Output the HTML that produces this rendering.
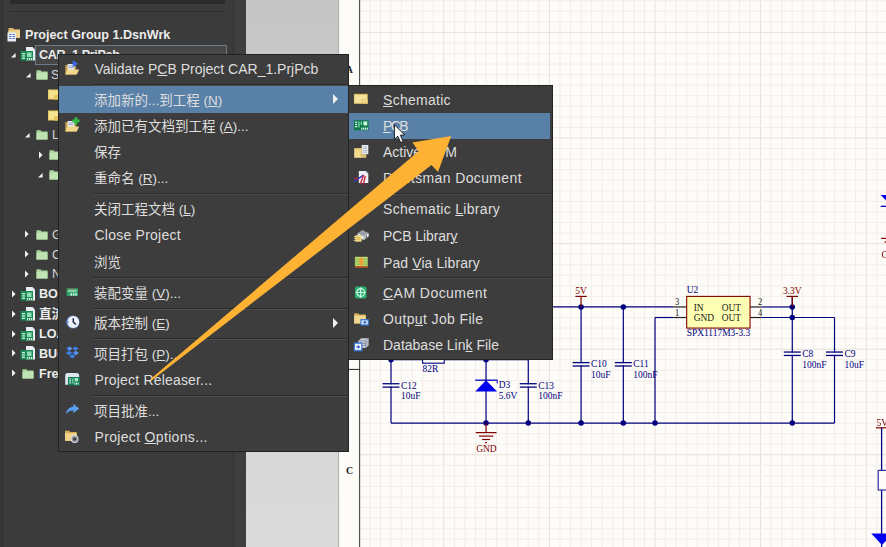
<!DOCTYPE html>
<html><head><meta charset="utf-8"><title>Altium Designer</title>
<style>
html,body{margin:0;padding:0}
html{overflow:hidden;background:#3b3b3b}
#app{position:absolute;left:-8px;top:-8px;width:902px;height:563px;filter:blur(0.45px)}
#stage{position:absolute;left:8px;top:8px;width:886px;height:547px}
body{width:886px;height:547px;overflow:hidden;position:relative;background:#3b3b3b;font-family:"Liberation Sans","Noto Sans CJK SC",sans-serif}
#panel{position:absolute;left:-8px;top:-8px;width:241px;height:563px;background:#3b3b3b}
#lstrip{position:absolute;left:-8px;top:-8px;width:10px;height:563px;background:#363636;border-right:1px solid #303030}
#search{position:absolute;left:10px;top:-8px;width:215px;height:12px;background:#2b2b2b}
#hline{position:absolute;left:10px;top:11.3px;width:215px;height:1px;background:#2e2e2e}
#vline{position:absolute;left:232.5px;top:-8px;width:1.5px;height:563px;background:#303030}
#strip{position:absolute;left:234px;top:-8px;width:12.3px;height:563px;background:#3e3e3e}
#gray{position:absolute;left:246px;top:-8px;width:92.5px;height:563px;background:linear-gradient(#c5c5c5,#dbdbdb);border-right:1px solid #a4a4a4;box-sizing:border-box}
#sheet{position:absolute;left:338px;top:-8px;width:556px;height:563px;background:#fdfcf8}
#sheetsvg{position:absolute;left:0;top:0;overflow:visible}
#sheetsvg text{font-family:"Liberation Serif",serif}
.tree{position:absolute;color:#ececec;font-weight:bold;font-size:12.6px;white-space:nowrap;line-height:16px}
.menu{position:absolute;background:#3d3d3d;border:1px solid #232323;box-sizing:border-box;color:#dedede;font-size:14px}
.row{position:absolute;left:0;right:0;height:26px;line-height:26px;white-space:nowrap}
.row.hl{background:#5981a8}
#mainmenu .row.hl{height:27px;line-height:27px}
#submenu .row.hl{right:1.5px}
#submenu .row,#submenu .sep{margin-top:0.5px}
.row .lb{position:absolute;left:34px;top:0}
#mainmenu .row .lb{left:35.5px}
#mainmenu .row .ic{left:5px;top:4px}
.row .ic{position:absolute;left:4px;top:5px;width:16px;height:16px}
.row .ic svg{display:block}
.row u{text-decoration:underline;text-underline-offset:1px;text-decoration-thickness:1px}
.row .ar{position:absolute;right:10px;top:8px;width:0;height:0;border-left:5px solid #f0f0f0;border-top:5px solid transparent;border-bottom:5px solid transparent}
.sep{position:absolute;left:34px;right:0;height:1px;background:#4c4c4c;border-top:1px solid #2c2c2c}
</style></head><body>
<div id="app"><div id="stage">
<div id="panel"></div><div id="lstrip"></div><div id="search"></div><div id="hline"></div>
<div id="vline"></div><div id="strip"></div><div id="gray"></div><div id="sheet"></div>
<svg id="sheetsvg" width="886" height="547" viewBox="0 0 886 547">
<g shape-rendering="auto">
<line x1="359.32" y1="-8" x2="359.32" y2="555" stroke="#f2eee9" stroke-width="1"/>
<line x1="369.88" y1="-8" x2="369.88" y2="555" stroke="#f2eee9" stroke-width="1"/>
<line x1="380.44" y1="-8" x2="380.44" y2="555" stroke="#f2eee9" stroke-width="1"/>
<line x1="391.0" y1="-8" x2="391.0" y2="555" stroke="#f2eee9" stroke-width="1"/>
<line x1="401.56" y1="-8" x2="401.56" y2="555" stroke="#f2eee9" stroke-width="1"/>
<line x1="412.12" y1="-8" x2="412.12" y2="555" stroke="#f2eee9" stroke-width="1"/>
<line x1="422.68" y1="-8" x2="422.68" y2="555" stroke="#f2eee9" stroke-width="1"/>
<line x1="433.24" y1="-8" x2="433.24" y2="555" stroke="#f2eee9" stroke-width="1"/>
<line x1="443.8" y1="-8" x2="443.8" y2="555" stroke="#e6e0da" stroke-width="1"/>
<line x1="454.36" y1="-8" x2="454.36" y2="555" stroke="#f2eee9" stroke-width="1"/>
<line x1="464.92" y1="-8" x2="464.92" y2="555" stroke="#f2eee9" stroke-width="1"/>
<line x1="475.48" y1="-8" x2="475.48" y2="555" stroke="#f2eee9" stroke-width="1"/>
<line x1="486.04" y1="-8" x2="486.04" y2="555" stroke="#f2eee9" stroke-width="1"/>
<line x1="496.6" y1="-8" x2="496.6" y2="555" stroke="#f2eee9" stroke-width="1"/>
<line x1="507.16" y1="-8" x2="507.16" y2="555" stroke="#f2eee9" stroke-width="1"/>
<line x1="517.72" y1="-8" x2="517.72" y2="555" stroke="#f2eee9" stroke-width="1"/>
<line x1="528.28" y1="-8" x2="528.28" y2="555" stroke="#f2eee9" stroke-width="1"/>
<line x1="538.84" y1="-8" x2="538.84" y2="555" stroke="#f2eee9" stroke-width="1"/>
<line x1="549.4" y1="-8" x2="549.4" y2="555" stroke="#e6e0da" stroke-width="1"/>
<line x1="559.96" y1="-8" x2="559.96" y2="555" stroke="#f2eee9" stroke-width="1"/>
<line x1="570.52" y1="-8" x2="570.52" y2="555" stroke="#f2eee9" stroke-width="1"/>
<line x1="581.08" y1="-8" x2="581.08" y2="555" stroke="#f2eee9" stroke-width="1"/>
<line x1="591.64" y1="-8" x2="591.64" y2="555" stroke="#f2eee9" stroke-width="1"/>
<line x1="602.2" y1="-8" x2="602.2" y2="555" stroke="#f2eee9" stroke-width="1"/>
<line x1="612.76" y1="-8" x2="612.76" y2="555" stroke="#f2eee9" stroke-width="1"/>
<line x1="623.32" y1="-8" x2="623.32" y2="555" stroke="#f2eee9" stroke-width="1"/>
<line x1="633.88" y1="-8" x2="633.88" y2="555" stroke="#f2eee9" stroke-width="1"/>
<line x1="644.44" y1="-8" x2="644.44" y2="555" stroke="#f2eee9" stroke-width="1"/>
<line x1="655.0" y1="-8" x2="655.0" y2="555" stroke="#e6e0da" stroke-width="1"/>
<line x1="665.56" y1="-8" x2="665.56" y2="555" stroke="#f2eee9" stroke-width="1"/>
<line x1="676.12" y1="-8" x2="676.12" y2="555" stroke="#f2eee9" stroke-width="1"/>
<line x1="686.68" y1="-8" x2="686.68" y2="555" stroke="#f2eee9" stroke-width="1"/>
<line x1="697.24" y1="-8" x2="697.24" y2="555" stroke="#f2eee9" stroke-width="1"/>
<line x1="707.8" y1="-8" x2="707.8" y2="555" stroke="#f2eee9" stroke-width="1"/>
<line x1="718.36" y1="-8" x2="718.36" y2="555" stroke="#f2eee9" stroke-width="1"/>
<line x1="728.92" y1="-8" x2="728.92" y2="555" stroke="#f2eee9" stroke-width="1"/>
<line x1="739.48" y1="-8" x2="739.48" y2="555" stroke="#f2eee9" stroke-width="1"/>
<line x1="750.04" y1="-8" x2="750.04" y2="555" stroke="#f2eee9" stroke-width="1"/>
<line x1="760.6" y1="-8" x2="760.6" y2="555" stroke="#e6e0da" stroke-width="1"/>
<line x1="771.16" y1="-8" x2="771.16" y2="555" stroke="#f2eee9" stroke-width="1"/>
<line x1="781.72" y1="-8" x2="781.72" y2="555" stroke="#f2eee9" stroke-width="1"/>
<line x1="792.28" y1="-8" x2="792.28" y2="555" stroke="#f2eee9" stroke-width="1"/>
<line x1="802.84" y1="-8" x2="802.84" y2="555" stroke="#f2eee9" stroke-width="1"/>
<line x1="813.4" y1="-8" x2="813.4" y2="555" stroke="#f2eee9" stroke-width="1"/>
<line x1="823.96" y1="-8" x2="823.96" y2="555" stroke="#f2eee9" stroke-width="1"/>
<line x1="834.52" y1="-8" x2="834.52" y2="555" stroke="#f2eee9" stroke-width="1"/>
<line x1="845.08" y1="-8" x2="845.08" y2="555" stroke="#f2eee9" stroke-width="1"/>
<line x1="855.64" y1="-8" x2="855.64" y2="555" stroke="#f2eee9" stroke-width="1"/>
<line x1="866.2" y1="-8" x2="866.2" y2="555" stroke="#e6e0da" stroke-width="1"/>
<line x1="876.76" y1="-8" x2="876.76" y2="555" stroke="#f2eee9" stroke-width="1"/>
<line x1="887.32" y1="-8" x2="887.32" y2="555" stroke="#f2eee9" stroke-width="1"/>
<line x1="359.32" y1="-9.84" x2="894" y2="-9.84" stroke="#f2eee9" stroke-width="1"/>
<line x1="359.32" y1="0.72" x2="894" y2="0.72" stroke="#f2eee9" stroke-width="1"/>
<line x1="359.32" y1="11.28" x2="894" y2="11.28" stroke="#f2eee9" stroke-width="1"/>
<line x1="359.32" y1="21.84" x2="894" y2="21.84" stroke="#f2eee9" stroke-width="1"/>
<line x1="359.32" y1="32.4" x2="894" y2="32.4" stroke="#e6e0da" stroke-width="1"/>
<line x1="359.32" y1="42.96" x2="894" y2="42.96" stroke="#f2eee9" stroke-width="1"/>
<line x1="359.32" y1="53.52" x2="894" y2="53.52" stroke="#f2eee9" stroke-width="1"/>
<line x1="359.32" y1="64.08" x2="894" y2="64.08" stroke="#f2eee9" stroke-width="1"/>
<line x1="359.32" y1="74.64" x2="894" y2="74.64" stroke="#f2eee9" stroke-width="1"/>
<line x1="359.32" y1="85.2" x2="894" y2="85.2" stroke="#f2eee9" stroke-width="1"/>
<line x1="359.32" y1="95.76" x2="894" y2="95.76" stroke="#f2eee9" stroke-width="1"/>
<line x1="359.32" y1="106.32" x2="894" y2="106.32" stroke="#f2eee9" stroke-width="1"/>
<line x1="359.32" y1="116.88" x2="894" y2="116.88" stroke="#f2eee9" stroke-width="1"/>
<line x1="359.32" y1="127.44" x2="894" y2="127.44" stroke="#f2eee9" stroke-width="1"/>
<line x1="359.32" y1="138.0" x2="894" y2="138.0" stroke="#e6e0da" stroke-width="1"/>
<line x1="359.32" y1="148.56" x2="894" y2="148.56" stroke="#f2eee9" stroke-width="1"/>
<line x1="359.32" y1="159.12" x2="894" y2="159.12" stroke="#f2eee9" stroke-width="1"/>
<line x1="359.32" y1="169.68" x2="894" y2="169.68" stroke="#f2eee9" stroke-width="1"/>
<line x1="359.32" y1="180.24" x2="894" y2="180.24" stroke="#f2eee9" stroke-width="1"/>
<line x1="359.32" y1="190.8" x2="894" y2="190.8" stroke="#f2eee9" stroke-width="1"/>
<line x1="359.32" y1="201.36" x2="894" y2="201.36" stroke="#f2eee9" stroke-width="1"/>
<line x1="359.32" y1="211.92" x2="894" y2="211.92" stroke="#f2eee9" stroke-width="1"/>
<line x1="359.32" y1="222.48" x2="894" y2="222.48" stroke="#f2eee9" stroke-width="1"/>
<line x1="359.32" y1="233.04" x2="894" y2="233.04" stroke="#f2eee9" stroke-width="1"/>
<line x1="359.32" y1="243.6" x2="894" y2="243.6" stroke="#e6e0da" stroke-width="1"/>
<line x1="359.32" y1="254.16" x2="894" y2="254.16" stroke="#f2eee9" stroke-width="1"/>
<line x1="359.32" y1="264.72" x2="894" y2="264.72" stroke="#f2eee9" stroke-width="1"/>
<line x1="359.32" y1="275.28" x2="894" y2="275.28" stroke="#f2eee9" stroke-width="1"/>
<line x1="359.32" y1="285.84" x2="894" y2="285.84" stroke="#f2eee9" stroke-width="1"/>
<line x1="359.32" y1="296.4" x2="894" y2="296.4" stroke="#f2eee9" stroke-width="1"/>
<line x1="359.32" y1="306.96" x2="894" y2="306.96" stroke="#f2eee9" stroke-width="1"/>
<line x1="359.32" y1="317.52" x2="894" y2="317.52" stroke="#f2eee9" stroke-width="1"/>
<line x1="359.32" y1="328.08" x2="894" y2="328.08" stroke="#f2eee9" stroke-width="1"/>
<line x1="359.32" y1="338.64" x2="894" y2="338.64" stroke="#f2eee9" stroke-width="1"/>
<line x1="359.32" y1="349.2" x2="894" y2="349.2" stroke="#e6e0da" stroke-width="1"/>
<line x1="359.32" y1="359.76" x2="894" y2="359.76" stroke="#f2eee9" stroke-width="1"/>
<line x1="359.32" y1="370.32" x2="894" y2="370.32" stroke="#f2eee9" stroke-width="1"/>
<line x1="359.32" y1="380.88" x2="894" y2="380.88" stroke="#f2eee9" stroke-width="1"/>
<line x1="359.32" y1="391.44" x2="894" y2="391.44" stroke="#f2eee9" stroke-width="1"/>
<line x1="359.32" y1="402.0" x2="894" y2="402.0" stroke="#f2eee9" stroke-width="1"/>
<line x1="359.32" y1="412.56" x2="894" y2="412.56" stroke="#f2eee9" stroke-width="1"/>
<line x1="359.32" y1="423.12" x2="894" y2="423.12" stroke="#f2eee9" stroke-width="1"/>
<line x1="359.32" y1="433.68" x2="894" y2="433.68" stroke="#f2eee9" stroke-width="1"/>
<line x1="359.32" y1="444.24" x2="894" y2="444.24" stroke="#f2eee9" stroke-width="1"/>
<line x1="359.32" y1="454.8" x2="894" y2="454.8" stroke="#e6e0da" stroke-width="1"/>
<line x1="359.32" y1="465.36" x2="894" y2="465.36" stroke="#f2eee9" stroke-width="1"/>
<line x1="359.32" y1="475.92" x2="894" y2="475.92" stroke="#f2eee9" stroke-width="1"/>
<line x1="359.32" y1="486.48" x2="894" y2="486.48" stroke="#f2eee9" stroke-width="1"/>
<line x1="359.32" y1="497.04" x2="894" y2="497.04" stroke="#f2eee9" stroke-width="1"/>
<line x1="359.32" y1="507.6" x2="894" y2="507.6" stroke="#f2eee9" stroke-width="1"/>
<line x1="359.32" y1="518.16" x2="894" y2="518.16" stroke="#f2eee9" stroke-width="1"/>
<line x1="359.32" y1="528.72" x2="894" y2="528.72" stroke="#f2eee9" stroke-width="1"/>
<line x1="359.32" y1="539.28" x2="894" y2="539.28" stroke="#f2eee9" stroke-width="1"/>
<line x1="359.32" y1="549.84" x2="894" y2="549.84" stroke="#f2eee9" stroke-width="1"/>
</g>
<line x1="359.6" y1="-8" x2="359.6" y2="555" stroke="#484848" stroke-width="1.1"/>
<line x1="338" y1="369.4" x2="359.5" y2="369.4" stroke="#202020" stroke-width="1"/>
<line x1="338.6" y1="-8" x2="338.6" y2="555" stroke="#a8a8a8" stroke-width="1"/>
<line x1="540" y1="306.96" x2="673.48" y2="306.96" stroke="#00007e" stroke-width="1.2"/>
<line x1="673.48" y1="306.96" x2="686.68" y2="306.96" stroke="#202020" stroke-width="1.2"/>
<line x1="673.48" y1="317.52" x2="686.68" y2="317.52" stroke="#202020" stroke-width="1.2"/>
<line x1="655.0" y1="317.52" x2="673.48" y2="317.52" stroke="#00007e" stroke-width="1.2"/>
<line x1="655.0" y1="317.52" x2="655.0" y2="423.12" stroke="#00007e" stroke-width="1.2"/>
<line x1="750.04" y1="306.96" x2="761.66" y2="306.96" stroke="#202020" stroke-width="1.2"/>
<line x1="750.04" y1="317.52" x2="761.66" y2="317.52" stroke="#202020" stroke-width="1.2"/>
<line x1="761.66" y1="306.96" x2="792.28" y2="306.96" stroke="#00007e" stroke-width="1.2"/>
<line x1="761.66" y1="317.52" x2="834.52" y2="317.52" stroke="#00007e" stroke-width="1.2"/>
<line x1="834.52" y1="317.52" x2="834.52" y2="423.12" stroke="#00007e" stroke-width="1.2"/>
<line x1="391.0" y1="423.12" x2="834.52" y2="423.12" stroke="#00007e" stroke-width="1.2"/>
<line x1="581.08" y1="306.96" x2="581.08" y2="423.12" stroke="#00007e" stroke-width="1.2"/>
<line x1="623.32" y1="306.96" x2="623.32" y2="423.12" stroke="#00007e" stroke-width="1.2"/>
<line x1="792.28" y1="296.4" x2="792.28" y2="423.12" stroke="#00007e" stroke-width="1.2"/>
<line x1="391.0" y1="355" x2="391.0" y2="423.12" stroke="#00007e" stroke-width="1.2"/>
<line x1="486.04" y1="355" x2="486.04" y2="423.12" stroke="#00007e" stroke-width="1.2"/>
<line x1="528.28" y1="355" x2="528.28" y2="423.12" stroke="#00007e" stroke-width="1.2"/>
<line x1="391.0" y1="359.76" x2="528.28" y2="359.76" stroke="#00007e" stroke-width="1.2"/>
<circle cx="486.04" cy="423.12" r="2.75" fill="#00007e"/>
<circle cx="528.28" cy="423.12" r="2.75" fill="#00007e"/>
<circle cx="581.08" cy="423.12" r="2.75" fill="#00007e"/>
<circle cx="623.32" cy="423.12" r="2.75" fill="#00007e"/>
<circle cx="655.0" cy="423.12" r="2.75" fill="#00007e"/>
<circle cx="792.28" cy="423.12" r="2.75" fill="#00007e"/>
<circle cx="581.08" cy="306.96" r="2.75" fill="#00007e"/>
<circle cx="623.32" cy="306.96" r="2.75" fill="#00007e"/>
<circle cx="792.28" cy="306.96" r="2.75" fill="#00007e"/>
<circle cx="792.28" cy="317.52" r="2.75" fill="#00007e"/>
<circle cx="391.0" cy="359.76" r="2.75" fill="#00007e"/>
<circle cx="486.04" cy="359.76" r="2.75" fill="#00007e"/>
<rect x="686.68" y="296.4" width="63.36" height="31.68" fill="#ffffb3" stroke="#800000" stroke-width="1.1"/>
<text transform="translate(686.68,293.4) scale(0.9,1)" fill="#00007e" font-size="10.5" text-anchor="start" >U2</text>
<text transform="translate(686.68,336.28) scale(0.9,1)" fill="#00007e" font-size="10.5" text-anchor="start" >SPX1117M3-3.3</text>
<text transform="translate(693.68,310.76) scale(0.9,1)" fill="#202020" font-size="10.5" text-anchor="start" >IN</text>
<text transform="translate(693.68,321.32) scale(0.9,1)" fill="#202020" font-size="10.5" text-anchor="start" >GND</text>
<text transform="translate(741.04,310.76) scale(0.9,1)" fill="#202020" font-size="10.5" text-anchor="end" >OUT</text>
<text transform="translate(741.04,321.32) scale(0.9,1)" fill="#202020" font-size="10.5" text-anchor="end" >OUT</text>
<text transform="translate(679.29,304.96) scale(0.9,1)" fill="#202020" font-size="9.5" text-anchor="end" >3</text>
<text transform="translate(679.29,316.02) scale(0.9,1)" fill="#202020" font-size="9.5" text-anchor="end" >1</text>
<text transform="translate(757.96,304.96) scale(0.9,1)" fill="#202020" font-size="9.5" text-anchor="start" >2</text>
<text transform="translate(757.96,316.02) scale(0.9,1)" fill="#202020" font-size="9.5" text-anchor="start" >4</text>
<line x1="575.38" y1="296.4" x2="586.7800000000001" y2="296.4" stroke="#800000" stroke-width="1.2"/>
<line x1="581.08" y1="296.4" x2="581.08" y2="306.96" stroke="#800000" stroke-width="1.2"/>
<text transform="translate(581.08,294.4) scale(0.9,1)" fill="#800000" font-size="10.5" text-anchor="middle" >5V</text>
<line x1="786.5799999999999" y1="296.4" x2="797.98" y2="296.4" stroke="#800000" stroke-width="1.2"/>
<line x1="792.28" y1="296.4" x2="792.28" y2="306.96" stroke="#800000" stroke-width="1.2"/>
<text transform="translate(792.28,294.4) scale(0.9,1)" fill="#800000" font-size="10.5" text-anchor="middle" >3.3V</text>
<rect x="579.58" y="363.21000000000004" width="3" height="2" fill="#fdfcf8"/>
<line x1="572.58" y1="362.61" x2="589.58" y2="362.61" stroke="#00007e" stroke-width="1.3"/>
<line x1="572.58" y1="366.01" x2="589.58" y2="366.01" stroke="#00007e" stroke-width="1.3"/>
<text transform="translate(591.08,367.41) scale(0.9,1)" fill="#00007e" font-size="10.5" text-anchor="start" >C10</text>
<text transform="translate(591.08,378.11) scale(0.9,1)" fill="#00007e" font-size="10.5" text-anchor="start" >10uF</text>
<rect x="621.82" y="363.21000000000004" width="3" height="2" fill="#fdfcf8"/>
<line x1="614.82" y1="362.61" x2="631.82" y2="362.61" stroke="#00007e" stroke-width="1.3"/>
<line x1="614.82" y1="366.01" x2="631.82" y2="366.01" stroke="#00007e" stroke-width="1.3"/>
<text transform="translate(633.32,367.41) scale(0.9,1)" fill="#00007e" font-size="10.5" text-anchor="start" >C11</text>
<text transform="translate(633.32,378.11) scale(0.9,1)" fill="#00007e" font-size="10.5" text-anchor="start" >100nF</text>
<rect x="790.78" y="352.65000000000003" width="3" height="2" fill="#fdfcf8"/>
<line x1="783.78" y1="352.05" x2="800.78" y2="352.05" stroke="#00007e" stroke-width="1.3"/>
<line x1="783.78" y1="355.45" x2="800.78" y2="355.45" stroke="#00007e" stroke-width="1.3"/>
<text transform="translate(802.28,356.85) scale(0.9,1)" fill="#00007e" font-size="10.5" text-anchor="start" >C8</text>
<text transform="translate(802.28,367.55) scale(0.9,1)" fill="#00007e" font-size="10.5" text-anchor="start" >100nF</text>
<rect x="833.02" y="352.65000000000003" width="3" height="2" fill="#fdfcf8"/>
<line x1="826.02" y1="352.05" x2="843.02" y2="352.05" stroke="#00007e" stroke-width="1.3"/>
<line x1="826.02" y1="355.45" x2="843.02" y2="355.45" stroke="#00007e" stroke-width="1.3"/>
<text transform="translate(844.52,356.85) scale(0.9,1)" fill="#00007e" font-size="10.5" text-anchor="start" >C9</text>
<text transform="translate(844.52,367.55) scale(0.9,1)" fill="#00007e" font-size="10.5" text-anchor="start" >10uF</text>
<rect x="389.5" y="384.33000000000004" width="3" height="2" fill="#fdfcf8"/>
<line x1="382.5" y1="383.73" x2="399.5" y2="383.73" stroke="#00007e" stroke-width="1.3"/>
<line x1="382.5" y1="387.13" x2="399.5" y2="387.13" stroke="#00007e" stroke-width="1.3"/>
<text transform="translate(401.0,388.53000000000003) scale(0.9,1)" fill="#00007e" font-size="10.5" text-anchor="start" >C12</text>
<text transform="translate(401.0,399.23) scale(0.9,1)" fill="#00007e" font-size="10.5" text-anchor="start" >10uF</text>
<rect x="526.78" y="384.33000000000004" width="3" height="2" fill="#fdfcf8"/>
<line x1="519.78" y1="383.73" x2="536.78" y2="383.73" stroke="#00007e" stroke-width="1.3"/>
<line x1="519.78" y1="387.13" x2="536.78" y2="387.13" stroke="#00007e" stroke-width="1.3"/>
<text transform="translate(538.28,388.53000000000003) scale(0.9,1)" fill="#00007e" font-size="10.5" text-anchor="start" >C13</text>
<text transform="translate(538.28,399.23) scale(0.9,1)" fill="#00007e" font-size="10.5" text-anchor="start" >100nF</text>
<rect x="422.6" y="356.2" width="21.6" height="7" fill="#fdfcf8" stroke="#00007e" stroke-width="1.1"/>
<text transform="translate(422.5,372) scale(0.9,1)" fill="#00007e" font-size="10.5" text-anchor="start" >82R</text>
<polygon points="475.24,391.5 497.04,391.5 486.04,380.2" fill="#0000f0"/>
<line x1="475.24" y1="380.2" x2="497.44" y2="380.2" stroke="#0000c0" stroke-width="1.3"/>
<line x1="497.24" y1="380.2" x2="497.24" y2="383.5" stroke="#0000c0" stroke-width="1.0"/>
<text transform="translate(498.74,387.7) scale(0.9,1)" fill="#00007e" font-size="10.5" text-anchor="start" >D3</text>
<text transform="translate(498.74,398.7) scale(0.9,1)" fill="#00007e" font-size="10.5" text-anchor="start" >5.6V</text>
<line x1="486.04" y1="423.12" x2="486.04" y2="432.6" stroke="#800000" stroke-width="1.2"/>
<line x1="475.74" y1="432.6" x2="496.54" y2="432.6" stroke="#800000" stroke-width="1.2"/>
<line x1="479.04" y1="436.1" x2="493.34000000000003" y2="436.1" stroke="#800000" stroke-width="1.2"/>
<line x1="482.04" y1="439.5" x2="490.04" y2="439.5" stroke="#800000" stroke-width="1.2"/>
<line x1="485.14000000000004" y1="442.7" x2="486.94" y2="442.7" stroke="#800000" stroke-width="1.2"/>
<text transform="translate(486.34000000000003,452.4) scale(0.9,1)" fill="#800000" font-size="10.5" text-anchor="middle" >GND</text>
<polygon points="880.7,195 902.5,195 891.5,206" fill="#0000f0"/>
<line x1="880.7" y1="206.3" x2="894" y2="206.3" stroke="#0000c0" stroke-width="1.3"/>
<line x1="881.1" y1="238.4" x2="894" y2="238.4" stroke="#800000" stroke-width="1.2"/>
<line x1="884.5" y1="242" x2="894" y2="242" stroke="#800000" stroke-width="1.2"/>
<text transform="translate(891.8,257.5) scale(0.9,1)" fill="#800000" font-size="10.5" text-anchor="middle" >GND</text>
<text transform="translate(876.5,426.3) scale(0.9,1)" fill="#800000" font-size="10.5" text-anchor="start" >5V</text>
<line x1="876" y1="427.8" x2="887.3" y2="427.8" stroke="#800000" stroke-width="1.2"/>
<line x1="881.6" y1="427.8" x2="881.6" y2="555" stroke="#00007e" stroke-width="1.3"/>
<rect x="878.2" y="470.4" width="16" height="19.6" fill="#fdfcf8" stroke="#3030a8" stroke-width="1.2"/>
<polygon points="871.2,533.6 893,533.6 882,545" fill="#0000f0"/>
<text transform="translate(345.8,73.3) scale(0.9,1)" fill="#202020" font-size="11" text-anchor="start" font-weight="bold">A</text>
<text transform="translate(346,473.5) scale(0.9,1)" fill="#202020" font-size="11" text-anchor="start" font-weight="bold">C</text>
</svg>
<div style="position:absolute;left:35px;top:45px;width:192px;height:20px;box-sizing:border-box;background:#474747;border:1px solid #6b7c86"></div>
<svg style="position:absolute;left:7px;top:27px" width="15" height="15" viewBox="0 0 15 15"><path d="M1.500 1h4.500l1 1.300h6v8.500h-11.500z" fill="#d9b76a"/><path d="M1.500 3.500h11.500v7.300h-11.500z" fill="#efd494"/><rect x="0.500" y="5.500" width="8.500" height="9" fill="#e8ecf4"/><path d="M2 7.500h2.500M5.500 7.500h2.500M2 9.500h2.500M5.500 9.500h2.500M2 11.500h2.500M5.500 11.500h2.500" stroke="#5b7fc4" stroke-width="1"/></svg>
<div class="tree" style="left:25px;top:26.7px;font-weight:bold;color:#ececec">Project Group 1.DsnWrk</div>
<svg style="position:absolute;left:11px;top:53px" width="5" height="5" viewBox="0 0 5 5"><path d="M4.600 0v4.600h-4.600z" fill="#f2f2f2"/></svg>
<svg style="position:absolute;left:20px;top:47px" width="16" height="14" viewBox="0 0 16 14"><path d="M6 0h6.500l2.500 2.500v11h-9z" fill="#e9edf2"/><rect x="0.500" y="4" width="12.500" height="9.500" fill="#1d8a55"/><rect x="2" y="6" width="3" height="1.300" fill="#c8f0dc"/><rect x="2" y="8.300" width="3" height="1.300" fill="#c8f0dc"/><rect x="2" y="10.600" width="3" height="1.300" fill="#c8f0dc"/><rect x="7" y="5.500" width="4.500" height="4.500" fill="#8fdcb6"/><rect x="7" y="11" width="1.200" height="1.800" fill="#e6fff2"/><rect x="9" y="11" width="1.200" height="1.800" fill="#e6fff2"/><rect x="11" y="11" width="1.200" height="1.800" fill="#e6fff2"/></svg>
<div class="tree" style="left:39px;top:46.7px;font-weight:bold;color:#ececec"><span style="letter-spacing:-0.35px">CAR_1.PrjPcb</span></div>
<svg style="position:absolute;left:26px;top:73px" width="5" height="5" viewBox="0 0 5 5"><path d="M4.600 0v4.600h-4.600z" fill="#f2f2f2"/></svg>
<svg style="position:absolute;left:36px;top:68.5px" width="13" height="11" viewBox="0 0 13 11"><path d="M0.500 1.200h4l1 1.300h6v8h-11z" fill="#a9d49c"/><path d="M0.500 3.600h11v6.900h-11z" fill="#bfe3b2"/></svg>
<div class="tree" style="left:51px;top:66.7px;font-weight:normal;color:#d6d6d6">Source Documents</div>
<svg style="position:absolute;left:48px;top:89px" width="12" height="11" viewBox="0 0 12 11"><rect x="0" y="0.500" width="11" height="10" fill="#e6c65c"/><rect x="0.800" y="1.300" width="9.400" height="8.400" fill="#f5e28e"/><rect x="6" y="6" width="5" height="4.500" fill="#e6c65c"/></svg>
<svg style="position:absolute;left:48px;top:109.5px" width="12" height="11" viewBox="0 0 12 11"><rect x="0" y="0.500" width="11" height="10" fill="#e6c65c"/><rect x="0.800" y="1.300" width="9.400" height="8.400" fill="#f5e28e"/><rect x="6" y="6" width="5" height="4.500" fill="#e6c65c"/></svg>
<svg style="position:absolute;left:25px;top:133px" width="5" height="5" viewBox="0 0 5 5"><path d="M4.600 0v4.600h-4.600z" fill="#f2f2f2"/></svg>
<svg style="position:absolute;left:36px;top:129px" width="13" height="11" viewBox="0 0 13 11"><path d="M0.500 1.200h4l1 1.300h6v8h-11z" fill="#a9d49c"/><path d="M0.500 3.600h11v6.900h-11z" fill="#bfe3b2"/></svg>
<div class="tree" style="left:52px;top:126.7px;font-weight:normal;color:#d6d6d6">Libraries</div>
<svg style="position:absolute;left:39px;top:151px" width="4" height="8" viewBox="0 0 4 8"><path d="M0 0.500l3.600 3.500-3.600 3.500z" fill="#f2f2f2"/></svg>
<svg style="position:absolute;left:49px;top:149px" width="13" height="11" viewBox="0 0 13 11"><path d="M0.500 1.200h4l1 1.300h6v8h-11z" fill="#a9d49c"/><path d="M0.500 3.600h11v6.900h-11z" fill="#bfe3b2"/></svg>
<svg style="position:absolute;left:38px;top:173px" width="5" height="5" viewBox="0 0 5 5"><path d="M4.600 0v4.600h-4.600z" fill="#f2f2f2"/></svg>
<svg style="position:absolute;left:49px;top:169px" width="13" height="11" viewBox="0 0 13 11"><path d="M0.500 1.200h4l1 1.300h6v8h-11z" fill="#a9d49c"/><path d="M0.500 3.600h11v6.900h-11z" fill="#bfe3b2"/></svg>
<svg style="position:absolute;left:25px;top:230px" width="4" height="8" viewBox="0 0 4 8"><path d="M0 0.500l3.600 3.500-3.600 3.500z" fill="#f2f2f2"/></svg>
<svg style="position:absolute;left:36px;top:228.5px" width="13" height="11" viewBox="0 0 13 11"><path d="M0.500 1.200h4l1 1.300h6v8h-11z" fill="#a9d49c"/><path d="M0.500 3.600h11v6.900h-11z" fill="#bfe3b2"/></svg>
<div class="tree" style="left:52px;top:226.7px;font-weight:normal;color:#d6d6d6">Generated</div>
<svg style="position:absolute;left:25px;top:250px" width="4" height="8" viewBox="0 0 4 8"><path d="M0 0.500l3.600 3.500-3.600 3.500z" fill="#f2f2f2"/></svg>
<svg style="position:absolute;left:36px;top:248.5px" width="13" height="11" viewBox="0 0 13 11"><path d="M0.500 1.200h4l1 1.300h6v8h-11z" fill="#a9d49c"/><path d="M0.500 3.600h11v6.900h-11z" fill="#bfe3b2"/></svg>
<div class="tree" style="left:52px;top:246.7px;font-weight:normal;color:#d6d6d6">Components</div>
<svg style="position:absolute;left:25px;top:269.5px" width="4" height="8" viewBox="0 0 4 8"><path d="M0 0.500l3.600 3.500-3.600 3.500z" fill="#f2f2f2"/></svg>
<svg style="position:absolute;left:36px;top:268.0px" width="13" height="11" viewBox="0 0 13 11"><path d="M0.500 1.200h4l1 1.300h6v8h-11z" fill="#a9d49c"/><path d="M0.500 3.600h11v6.900h-11z" fill="#bfe3b2"/></svg>
<div class="tree" style="left:52px;top:266.2px;font-weight:normal;color:#d6d6d6">Nets</div>
<svg style="position:absolute;left:12px;top:289.5px" width="4" height="8" viewBox="0 0 4 8"><path d="M0 0.500l3.600 3.500-3.600 3.500z" fill="#f2f2f2"/></svg>
<svg style="position:absolute;left:20px;top:286.5px" width="16" height="14" viewBox="0 0 16 14"><path d="M6 0h6.500l2.500 2.500v11h-9z" fill="#e9edf2"/><rect x="0.500" y="4" width="12.500" height="9.500" fill="#1d8a55"/><rect x="2" y="6" width="3" height="1.300" fill="#c8f0dc"/><rect x="2" y="8.300" width="3" height="1.300" fill="#c8f0dc"/><rect x="2" y="10.600" width="3" height="1.300" fill="#c8f0dc"/><rect x="7" y="5.500" width="4.500" height="4.500" fill="#8fdcb6"/><rect x="7" y="11" width="1.200" height="1.800" fill="#e6fff2"/><rect x="9" y="11" width="1.200" height="1.800" fill="#e6fff2"/><rect x="11" y="11" width="1.200" height="1.800" fill="#e6fff2"/></svg>
<div class="tree" style="left:39px;top:286.2px;font-weight:bold;color:#ececec">BOOST.PrjPcb</div>
<svg style="position:absolute;left:12px;top:309.5px" width="4" height="8" viewBox="0 0 4 8"><path d="M0 0.500l3.600 3.500-3.600 3.500z" fill="#f2f2f2"/></svg>
<svg style="position:absolute;left:20px;top:306.5px" width="16" height="14" viewBox="0 0 16 14"><path d="M6 0h6.500l2.500 2.500v11h-9z" fill="#e9edf2"/><rect x="0.500" y="4" width="12.500" height="9.500" fill="#1d8a55"/><rect x="2" y="6" width="3" height="1.300" fill="#c8f0dc"/><rect x="2" y="8.300" width="3" height="1.300" fill="#c8f0dc"/><rect x="2" y="10.600" width="3" height="1.300" fill="#c8f0dc"/><rect x="7" y="5.500" width="4.500" height="4.500" fill="#8fdcb6"/><rect x="7" y="11" width="1.200" height="1.800" fill="#e6fff2"/><rect x="9" y="11" width="1.200" height="1.800" fill="#e6fff2"/><rect x="11" y="11" width="1.200" height="1.800" fill="#e6fff2"/></svg>
<div class="tree" style="left:39px;top:306.2px;font-weight:bold;color:#ececec">直流电机.PrjPcb</div>
<svg style="position:absolute;left:12px;top:329.5px" width="4" height="8" viewBox="0 0 4 8"><path d="M0 0.500l3.600 3.500-3.600 3.500z" fill="#f2f2f2"/></svg>
<svg style="position:absolute;left:20px;top:326.5px" width="16" height="14" viewBox="0 0 16 14"><path d="M6 0h6.500l2.500 2.500v11h-9z" fill="#e9edf2"/><rect x="0.500" y="4" width="12.500" height="9.500" fill="#1d8a55"/><rect x="2" y="6" width="3" height="1.300" fill="#c8f0dc"/><rect x="2" y="8.300" width="3" height="1.300" fill="#c8f0dc"/><rect x="2" y="10.600" width="3" height="1.300" fill="#c8f0dc"/><rect x="7" y="5.500" width="4.500" height="4.500" fill="#8fdcb6"/><rect x="7" y="11" width="1.200" height="1.800" fill="#e6fff2"/><rect x="9" y="11" width="1.200" height="1.800" fill="#e6fff2"/><rect x="11" y="11" width="1.200" height="1.800" fill="#e6fff2"/></svg>
<div class="tree" style="left:39px;top:326.2px;font-weight:bold;color:#ececec">LOAD.PrjPcb</div>
<svg style="position:absolute;left:12px;top:349px" width="4" height="8" viewBox="0 0 4 8"><path d="M0 0.500l3.600 3.500-3.600 3.500z" fill="#f2f2f2"/></svg>
<svg style="position:absolute;left:20px;top:346px" width="16" height="14" viewBox="0 0 16 14"><path d="M6 0h6.500l2.500 2.500v11h-9z" fill="#e9edf2"/><rect x="0.500" y="4" width="12.500" height="9.500" fill="#1d8a55"/><rect x="2" y="6" width="3" height="1.300" fill="#c8f0dc"/><rect x="2" y="8.300" width="3" height="1.300" fill="#c8f0dc"/><rect x="2" y="10.600" width="3" height="1.300" fill="#c8f0dc"/><rect x="7" y="5.500" width="4.500" height="4.500" fill="#8fdcb6"/><rect x="7" y="11" width="1.200" height="1.800" fill="#e6fff2"/><rect x="9" y="11" width="1.200" height="1.800" fill="#e6fff2"/><rect x="11" y="11" width="1.200" height="1.800" fill="#e6fff2"/></svg>
<div class="tree" style="left:39px;top:345.7px;font-weight:bold;color:#ececec">BUCK.PrjPcb</div>
<svg style="position:absolute;left:12px;top:369px" width="4" height="8" viewBox="0 0 4 8"><path d="M0 0.500l3.600 3.500-3.600 3.500z" fill="#f2f2f2"/></svg>
<svg style="position:absolute;left:22px;top:367.5px" width="13" height="11" viewBox="0 0 13 11"><path d="M0.500 1.200h4l1 1.300h6v8h-11z" fill="#a9d49c"/><path d="M0.500 3.600h11v6.900h-11z" fill="#bfe3b2"/></svg>
<div class="tree" style="left:39px;top:365.7px;font-weight:bold;color:#ececec">Free Documents</div>
<div class="menu" id="mainmenu" style="left:58px;top:54px;width:290.5px;height:398px">
<div class="row" style="top:1px"><span class="ic"><svg width="18" height="18" viewBox="0 0 18 18" style="overflow:visible"><path d="M1.300 5h3.200l1 1.200h6.500v8.300h-10.700z" fill="#c79f48"/><rect x="3.600" y="4" width="6.800" height="7.500" fill="#e9ecf2"/><path d="M4.600 5.8h4.800M4.600 7.6h4.800" stroke="#8d9ab8" stroke-width="0.900"/><path d="M3.300 9.4h11.900l-2.400 5.100h-11.500z" fill="#f1d68c"/><path d="M8.700 0.200l5.200 3.500-5.200 3.500z" fill="#3c6cf0"/></svg></span><span class="lb">Validate P<u>C</u>B Project CAR_1.PrjPcb</span></div>
<div class="sep" style="top:28.6px"></div>
<div class="row hl" style="top:31px"><span class="lb" style="font-size:13.5px;top:1.3px;margin-left:-0.6px">添加新的...到工程 (<u>N</u>)</span><span class="ar"></span></div>
<div class="row" style="top:58px"><span class="ic"><svg width="18" height="18" viewBox="0 0 18 18" style="overflow:visible"><path d="M1.300 5h3.200l1 1.200h6.500v8.300h-10.700z" fill="#c79f48"/><rect x="3.600" y="4" width="6.800" height="7.500" fill="#e9ecf2"/><path d="M4.600 5.8h4.800M4.600 7.6h4.800" stroke="#8d9ab8" stroke-width="0.900"/><path d="M3.300 9.4h11.900l-2.400 5.100h-11.500z" fill="#f1d68c"/><path d="M10.700 0.300h2.600v2.300h2.300v2.600h-2.300v2.300h-2.600v-2.300h-2.300v-2.600h2.300z" fill="#2fc044"/></svg></span><span class="lb" style="font-size:13.5px;top:1.3px;margin-left:-0.6px">添加已有文档到工程 (<u>A</u>)...</span></div>
<div class="row" style="top:84px"><span class="lb" style="font-size:13.5px;top:1.3px;margin-left:-0.6px">保存</span></div>
<div class="row" style="top:110px"><span class="lb" style="font-size:13.5px;top:1.3px;margin-left:-0.6px">重命名 (<u>R</u>)...</span></div>
<div class="sep" style="top:138px"></div>
<div class="row" style="top:141px"><span class="lb" style="font-size:13.5px;top:1.3px;margin-left:-0.6px">关闭工程文档 (<u>L</u>)</span></div>
<div class="row" style="top:167px"><span class="lb" style="letter-spacing:0.23px">Close Project</span></div>
<div class="row" style="top:194px"><span class="lb" style="font-size:13.5px;top:1.3px;margin-left:-0.6px">浏览</span></div>
<div class="sep" style="top:222px"></div>
<div class="row" style="top:225px"><span class="ic"><svg width="18" height="18" viewBox="0 0 18 18" style="overflow:visible"><rect x="2.600" y="4.200" width="11.400" height="7.800" fill="#2e9e6a"/><rect x="3.800" y="5.600" width="8.800" height="2.600" fill="#86cfa6"/><path d="M4 5h7" stroke="#c06050" stroke-width="0.600"/><rect x="6.500" y="9.300" width="1.400" height="2.300" fill="#eafaf2"/><rect x="8.900" y="9.300" width="1.400" height="2.300" fill="#eafaf2"/><rect x="11.300" y="9.300" width="1.400" height="2.300" fill="#eafaf2"/></svg></span><span class="lb" style="font-size:13.5px;top:1.3px;margin-left:-0.6px">装配变量 (<u>V</u>)...</span></div>
<div class="sep" style="top:253px"></div>
<div class="row" style="top:255px"><span class="ic"><svg width="18" height="18" viewBox="0 0 18 18" style="overflow:visible"><circle cx="9" cy="8" r="6.600" fill="#5c83c8"/><circle cx="9.300" cy="8" r="5.900" fill="#eef1f7"/><path d="M9.300 4.200V8.200l2.600 2.200" stroke="#1e2c58" stroke-width="1.500" fill="none"/><path d="M1.300 7.200l2 2.600 1.800-2.600z" fill="#5c83c8"/></svg></span><span class="lb" style="font-size:13.5px;top:1.3px;margin-left:-0.6px">版本控制 (<u>E</u>)</span><span class="ar"></span></div>
<div class="sep" style="top:283px"></div>
<div class="row" style="top:286px"><span class="ic"><svg width="18" height="18" viewBox="0 0 18 18" style="overflow:visible"><path d="M5.100 1.400l3.200 2.200-3.200 2.200-3.200-2.200zM11.500 1.400l3.200 2.200-3.200 2.200-3.200-2.200zM5.100 5.800l3.200 2.200-3.200 2.200-3.200-2.200zM11.500 5.800l3.200 2.200-3.200 2.200-3.200-2.200zM8.300 9.200l3.100 2.100-3.100 2.100-3.100-2.100z" fill="#3f7fe8"/><path d="M5.100 1.400l3.200 2.200-3.200 2.200zM11.500 5.800l3.200 2.200-3.200 2.200z" fill="#6ba0f2"/></svg></span><span class="lb" style="font-size:13.5px;top:1.3px;margin-left:-0.6px">项目打包 (<u>P</u>)...</span></div>
<div class="row" style="top:312px"><span class="ic"><svg width="18" height="18" viewBox="0 0 18 18" style="overflow:visible"><path d="M1.200 4.500q0-2.500 2.500-2.500h9q2.500 0 2.500 2.500v9.300h-14z" fill="#dbe6ee"/><rect x="4" y="6" width="11.800" height="8.500" fill="#0f7a50"/><rect x="5.200" y="7.300" width="2" height="1.200" fill="#c8f0dc"/><rect x="5.200" y="9.300" width="2" height="1.200" fill="#c8f0dc"/><rect x="5.200" y="11.300" width="2" height="1.200" fill="#c8f0dc"/><rect x="8.200" y="7.300" width="1.300" height="5.200" fill="#7fd3a8"/><rect x="10.600" y="7" width="3.600" height="3.400" fill="#a8e6c8"/><rect x="10.400" y="11.600" width="1" height="2" fill="#eafff4"/><rect x="12" y="11.600" width="1" height="2" fill="#eafff4"/><rect x="13.600" y="11.600" width="1" height="2" fill="#eafff4"/></svg></span><span class="lb" style="letter-spacing:0.18px">Project Releaser...</span></div>
<div class="sep" style="top:340px"></div>
<div class="row" style="top:343px"><span class="ic"><svg width="18" height="18" viewBox="0 0 18 18" style="overflow:visible"><path d="M9.300 1.900l5.900 4.700-5.900 4.700V8.500C6 8.400 3.600 9.600 2 12.500 2.500 7.600 5.300 5 9.300 4.700z" fill="#58a0f2"/></svg></span><span class="lb" style="font-size:13.5px;top:1.3px;margin-left:-0.6px">项目批准...</span></div>
<div class="row" style="top:369px"><span class="ic"><svg width="18" height="18" viewBox="0 0 18 18" style="overflow:visible"><path d="M1 2.700h4.200l1 1.300h6.500v8.800h-11.700z" fill="#d6ae58"/><path d="M1 5.200h11.700v7.600h-11.700z" fill="#f0d48c"/><circle cx="10.700" cy="11" r="3.900" fill="#d8dce2"/><circle cx="10.700" cy="11" r="3" fill="#8a9098"/><circle cx="10.700" cy="11" r="1.500" fill="#3e3e3e"/></svg></span><span class="lb" style="letter-spacing:0.33px">Project <u>O</u>ptions...</span></div>
</div>
<div class="menu" id="submenu" style="left:348px;top:84.5px;width:204.5px;height:275px">
<div class="row" style="top:1px"><span class="ic"><svg width="18" height="18" viewBox="0 0 18 18" style="overflow:visible"><rect x="0.900" y="1.800" width="13.800" height="10" fill="#d9b95c"/><rect x="1.500" y="2.800" width="12.600" height="8.400" fill="#f5e29a"/><rect x="8.700" y="6.800" width="6" height="5" fill="#e2c468"/><path d="M9.600 8.200h4.600M9.600 10h4.600" stroke="#f7eab4" stroke-width="0.900"/></svg></span><span class="lb" style="letter-spacing:0.28px"><u>S</u>chematic</span></div>
<div class="row hl" style="top:27px"><span class="ic"><svg width="18" height="18" viewBox="0 0 18 18" style="overflow:visible"><rect x="0.900" y="2.300" width="14.700" height="10" fill="#0e7a4c"/><rect x="2" y="3.600" width="2.200" height="1.300" fill="#c8f0dc"/><rect x="2" y="5.800" width="2.200" height="1.300" fill="#c8f0dc"/><rect x="2" y="8" width="2.200" height="1.300" fill="#c8f0dc"/><rect x="5.200" y="3.600" width="1.500" height="5.800" fill="#6fcf9f"/><rect x="7.600" y="3.600" width="1.500" height="3.400" fill="#6fcf9f"/><rect x="10.300" y="3.300" width="4" height="4.200" fill="#a8e6c8"/><rect x="11.300" y="4.200" width="2" height="2.400" fill="#e8fff4"/><rect x="8.300" y="9.600" width="1.100" height="2.100" fill="#eafff4"/><rect x="10.100" y="9.600" width="1.100" height="2.100" fill="#eafff4"/><rect x="11.900" y="9.600" width="1.100" height="2.100" fill="#eafff4"/><rect x="13.700" y="9.600" width="1.100" height="2.100" fill="#eafff4"/></svg></span><span class="lb" style="letter-spacing:-1.6px"><u>P</u>CB</span></div>
<div class="row" style="top:53px"><span class="ic"><svg width="18" height="18" viewBox="0 0 18 18" style="overflow:visible"><rect x="8.700" y="1" width="6.600" height="9.200" fill="#eef0f5"/><path d="M9.800 2.800h4.400M9.800 4.600h4.400M9.800 6.400h4.400M9.800 8.200h4.400" stroke="#9aa2b4" stroke-width="0.800"/><rect x="1.200" y="4.200" width="7.500" height="9.600" fill="#f1da8e"/><rect x="1.200" y="4.200" width="7.500" height="1.200" fill="#dcbc60"/><rect x="7.300" y="10.200" width="6" height="3.600" fill="#dfc273"/></svg></span><span class="lb">Active BOM</span></div>
<div class="row" style="top:79px"><span class="ic"><svg width="18" height="18" viewBox="0 0 18 18" style="overflow:visible"><path d="M5.800 1h7l2.500 2.500V13H5.800z" fill="#eef0f6"/><path d="M12.800 1v2.500h2.500z" fill="#c2c8d6"/><path d="M0.900 11.600L10.500 5.200" stroke="#2a34c0" stroke-width="1.500"/><path d="M1.200 8.200l4.200 1.200" stroke="#c02040" stroke-width="1.200"/><path d="M7.300 14l3.400-9M10.300 14.800l2-8.800" stroke="#c8203c" stroke-width="1.300"/></svg></span><span class="lb" style="letter-spacing:0.37px">Draftsman Document</span></div>
<div class="sep" style="top:107px"></div>
<div class="row" style="top:110px"><span class="lb" style="letter-spacing:0.3px">Schematic <u>L</u>ibrary</span></div>
<div class="row" style="top:136.7px"><span class="ic"><svg width="18" height="18" viewBox="0 0 18 18" style="overflow:visible"><path d="M9.400 1.900l6.200 3-4.800 3.400-6.200-3z" fill="#9aa1aa"/><path d="M4.600 5.300l6.200 3v3.600l-6.200-3z" fill="#eceef2"/><path d="M10.800 8.300l4.800-3.400v3.600l-4.800 3.400z" fill="#f8f9fb"/><path d="M12 8.300v2.500M13.600 7.200v2.500" stroke="#40444c" stroke-width="0.900"/><rect x="2.300" y="7.300" width="6.300" height="6.400" fill="#f0d88e"/><rect x="3.700" y="8.800" width="3.300" height="3.300" fill="#e0c060"/><path d="M0.900 8.500h1.400M0.900 10.500h1.400M0.900 12.500h1.400" stroke="#f0d88e" stroke-width="0.900"/></svg></span><span class="lb" style="letter-spacing:-0.1px">PCB Librar<u>y</u></span></div>
<div class="row" style="top:163.5px"><span class="ic"><svg width="18" height="18" viewBox="0 0 18 18" style="overflow:visible"><rect x="1.900" y="1.800" width="12.800" height="11" fill="#c4dc74"/><rect x="1.900" y="11.200" width="12.800" height="1.600" fill="#a03818"/><path d="M1.900 4.300h12.800M1.900 6.700h12.800M1.900 9.100h12.800" stroke="#6ab04c" stroke-width="0.900"/><path d="M8.300 2l3 2.400h-1.800l1.800 2.400h-1.800l1.800 2.400h-2v2h-2v-2h-2l1.800-2.400h-1.800l1.800-2.400h-1.800z" fill="#f0a03c"/></svg></span><span class="lb" style="letter-spacing:0.1px">Pad <u>V</u>ia Library</span></div>
<div class="sep" style="top:191px"></div>
<div class="row" style="top:193.8px"><span class="ic"><svg width="18" height="18" viewBox="0 0 18 18" style="overflow:visible"><rect x="1.900" y="1.500" width="11.600" height="12.100" rx="2" fill="#28b070"/><path d="M7.700 2.300v10.500M2.700 7.500h10" stroke="#d8f8e8" stroke-width="1.100"/><circle cx="7.700" cy="7.500" r="3.900" fill="none" stroke="#d8f8e8" stroke-width="1.100"/></svg></span><span class="lb" style="letter-spacing:0.46px"><u>C</u>AM Document</span></div>
<div class="row" style="top:220px"><span class="ic"><svg width="18" height="18" viewBox="0 0 18 18" style="overflow:visible"><path d="M1.200 2.200h4l1 1.300h6.600v9h-11.600z" fill="#d4ac54"/><path d="M1.200 4.500h11.600v8h-11.600z" fill="#f0d690"/><rect x="7.300" y="8.100" width="8.600" height="6.500" fill="#3a78d8"/><rect x="8.500" y="9.400" width="6.200" height="3.900" fill="#eef4fc"/><path d="M9.600 11.300h2.600M11.600 10l1.700 1.300-1.700 1.300z" stroke="#2a5cb8" stroke-width="0.800" fill="#2a5cb8"/></svg></span><span class="lb" style="letter-spacing:0.37px">Outp<u>u</u>t Job File</span></div>
<div class="row" style="top:246px"><span class="ic"><svg width="18" height="18" viewBox="0 0 18 18" style="overflow:visible"><path d="M5.300 3.800l3-2.500h7.300v7.200l-3 2.500h-7.300z" fill="#c8cdd8"/><path d="M5.300 3.800h7.300l3-2.500M5.300 6.200h7.300l3-2.500M5.300 8.600h7.300l3-2.500M12.600 3.800v7.200" stroke="#8088a0" stroke-width="0.800" fill="none"/><rect x="0.800" y="5.400" width="8.600" height="8.900" fill="#3a78d8"/><rect x="2" y="6.800" width="6.200" height="6.100" fill="#eef4fc"/><path d="M3 9.900h2.600M5 8.500l1.800 1.400-1.800 1.400z" stroke="#2a5cb8" stroke-width="0.800" fill="#2a5cb8"/></svg></span><span class="lb">Database Lin<u>k</u> File</span></div>
</div>
<svg style="position:absolute;left:0;top:0" width="886" height="547" viewBox="0 0 886 547">
<polygon points="150.3,379.3 151.6,380.4 431.5,165 438,172 451.2,136.1 412.4,142.4 418.5,151.2" fill="#fdb233"/>
<path d="M394.4 124.6 L394.4 139.3 L397.8 136.2 L400.6 142.6 L403.2 141.5 L400.4 135.2 L404.6 134.9 Z" fill="#fff" stroke="#1a1a1a" stroke-width="1" stroke-linejoin="round"/>
</svg>
</div></div>
</body></html>
